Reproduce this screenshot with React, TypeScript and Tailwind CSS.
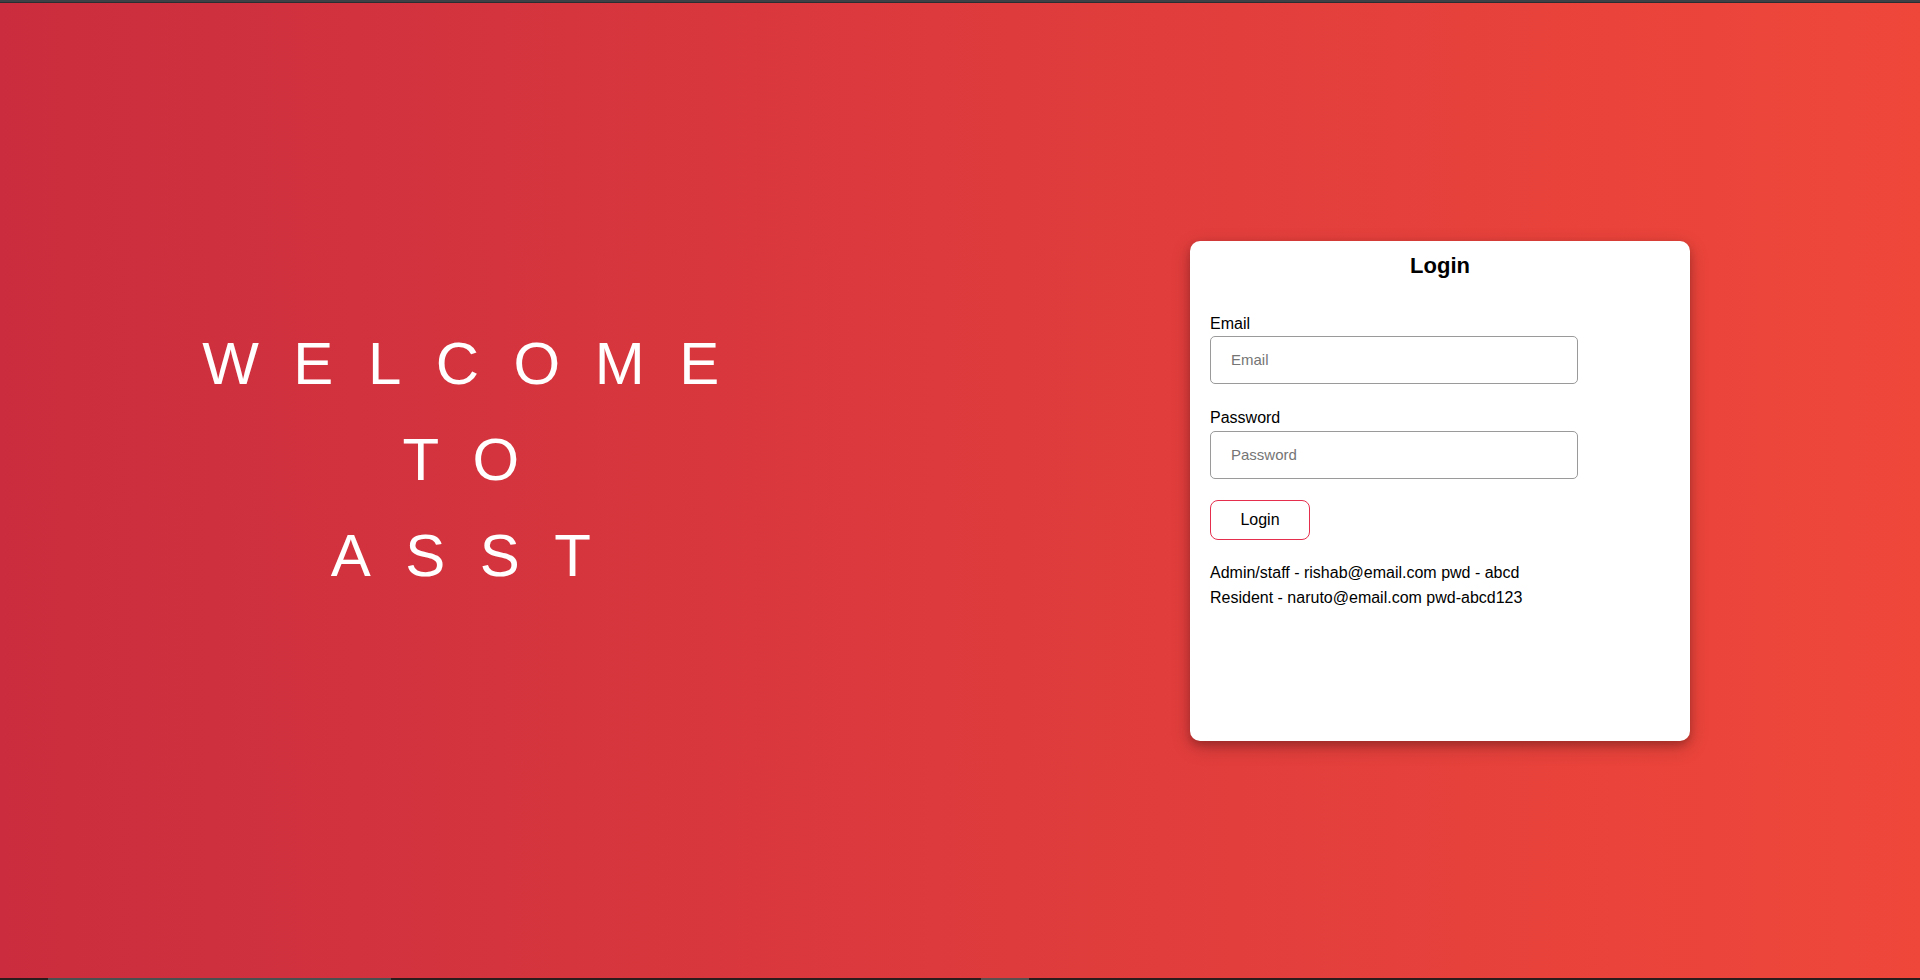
import React from "react";

export default function App() {
  return (
    <div className="h-[980px] w-[1920px] flex flex-col overflow-hidden" style={{ fontFamily: '"Liberation Sans", Arial, sans-serif' }}>
      <div className="h-[2px] bg-[#3e4246] shrink-0" />
      <div className="h-[1px] bg-[#2a2e31] shrink-0" />
      <main className="flex-1 flex bg-gradient-to-r from-[#cb2d3e] to-[#ef473a]">
        <section className="w-1/2 flex items-center justify-center">
          <h1 className="mb-[62px] mr-[4px] text-center text-white text-[60px] leading-[96px] tracking-[34.5px] font-normal">
            <div>WELCOME</div>
            <div>TO</div>
            <div>ASST</div>
          </h1>
        </section>
        <section className="w-1/2 flex items-center justify-center">
          <div className="w-[500px] h-[500px] bg-white rounded-[10px] px-[20px] pt-[12px] shadow-[0_4px_8px_0_rgba(0,0,0,0.2),0_6px_20px_0_rgba(0,0,0,0.19)] text-black">
            <h2 className="text-center text-[22px] leading-[25px] font-bold">Login</h2>
            <form className="mt-[37px] flex flex-col" onSubmit={(e) => e.preventDefault()}>
              <label className="text-[16px] leading-[18px]">Email</label>
              <input
                type="email"
                placeholder="Email"
                className="mt-[3px] w-[368px] h-[48px] border border-[#9a9a9a] rounded-[5px] pl-[20px] text-[15px] placeholder:text-[#757575] outline-none"
              />
              <label className="mt-[25px] text-[16px] leading-[18px]">Password</label>
              <input
                type="password"
                placeholder="Password"
                className="mt-[4px] w-[368px] h-[48px] border border-[#9a9a9a] rounded-[5px] pl-[20px] text-[15px] placeholder:text-[#757575] outline-none"
              />
              <button
                type="submit"
                className="mt-[21px] w-[100px] h-[40px] border border-[#e52e4d] rounded-[8px] bg-white text-[16px] text-black"
              >
                Login
              </button>
            </form>
            <div className="mt-[20px] text-[16px] leading-[25px]">
              <p>Admin/staff - rishab@email.com pwd - abcd</p>
              <p>Resident - naruto@email.com pwd-abcd123</p>
            </div>
          </div>
        </section>
      </main>
      <div className="h-[2px] bg-[#2b1d1e] shrink-0 flex">
        <div className="ml-[48px] w-[343px] bg-[#4a4f4f]" />
        <div className="ml-[590px] w-[48px] bg-[#5a5050]" />
      </div>
    </div>
  );
}
